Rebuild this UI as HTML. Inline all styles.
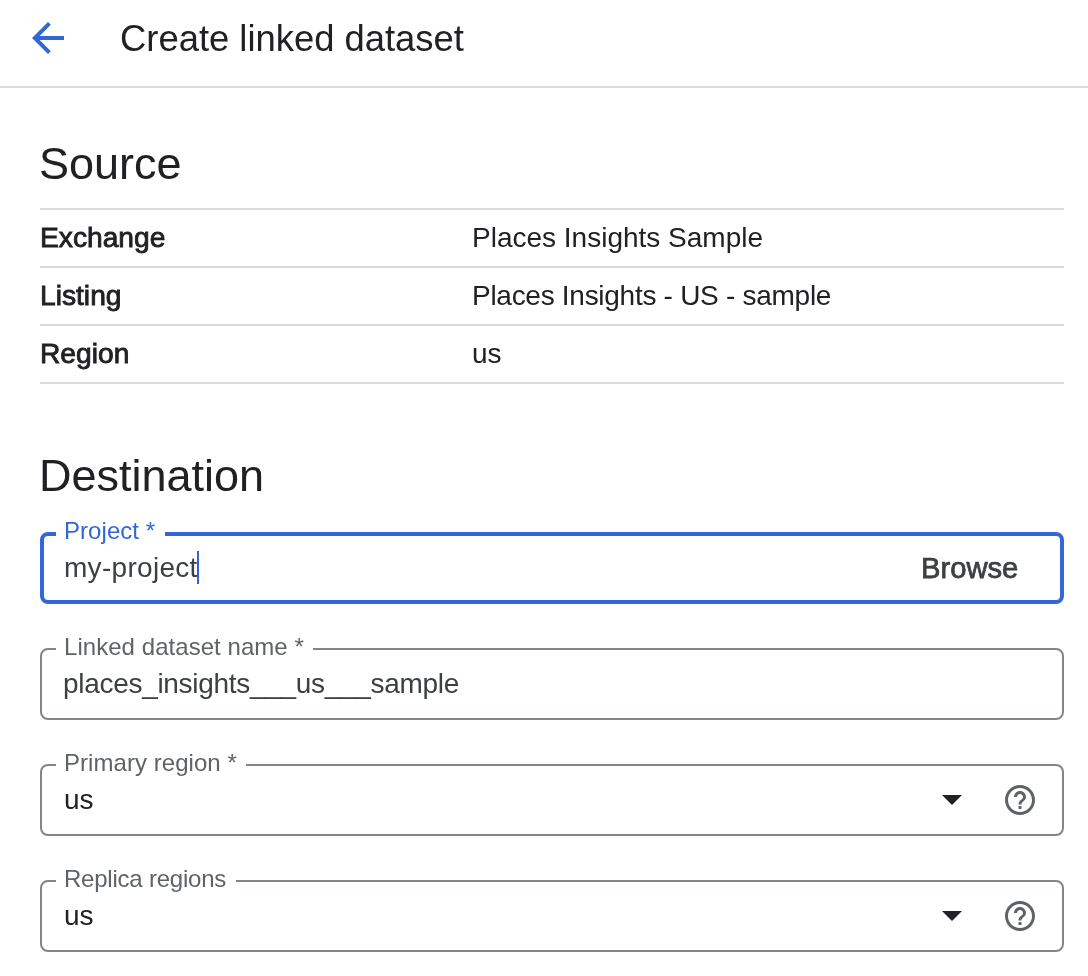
<!DOCTYPE html>
<html><head><meta charset="utf-8">
<style>
*{box-sizing:border-box;margin:0;padding:0}
html,body{width:1088px;height:976px;overflow:hidden;background:#fff}
body{font-family:"Liberation Sans",sans-serif;color:#202124;position:relative}
.abs,.flabel,.fval{will-change:transform}
.abs{position:absolute;white-space:nowrap}
.hdr-line{position:absolute;left:0;top:86px;width:1088px;height:2px;background:#dadce0}
.title{left:120px;top:15px;font-size:36.4px;line-height:48px}
.h2{font-size:45px;line-height:56px}
.rule{position:absolute;left:40px;width:1024px;height:2px;background:#dadce0}
.lbl{font-size:28.2px;line-height:40px;color:#202124;-webkit-text-stroke:0.85px #202124}
.val{font-size:28px;line-height:40px;color:#202124}
.field{position:absolute;left:40px;width:1024px;height:72px;border:2px solid #80868b;border-radius:8px}
.field.focus{border:4px solid #3367d6}
.flabel{position:absolute;background:#fff;font-size:24px;line-height:28px;color:#5f6368;padding:0 9.5px 0 8px;letter-spacing:0.05px}
.fval{position:absolute;font-size:28px;line-height:36px;color:#202124}
</style></head>
<body>
<svg class="abs" style="left:24px;top:14px" width="48" height="48" viewBox="0 0 24 24"><path fill="#3367d6" d="M20 11H7.83l5.59-5.59L12 4l-8 8 8 8 1.41-1.41L7.83 13H20v-2z"/></svg>
<div class="abs title">Create linked dataset</div>
<div class="hdr-line"></div>

<div class="abs h2" style="left:39px;top:136px">Source</div>
<div class="rule" style="top:208px"></div>
<div class="abs lbl" style="left:40px;top:217px">Exchange</div>
<div class="abs val" style="left:472px;top:218px">Places Insights Sample</div>
<div class="rule" style="top:266px"></div>
<div class="abs lbl" style="left:40px;top:275px">Listing</div>
<div class="abs val" style="left:472px;top:276px;letter-spacing:-0.28px">Places Insights - US - sample</div>
<div class="rule" style="top:324px"></div>
<div class="abs lbl" style="left:40px;top:333px">Region</div>
<div class="abs val" style="left:472px;top:334px">us</div>
<div class="rule" style="top:382px"></div>

<div class="abs h2" style="left:39px;top:448px">Destination</div>

<div class="field focus" style="top:532px"></div>
<div class="flabel" style="left:56px;top:517px;color:#3367d6">Project *</div>
<div class="fval" style="left:64px;top:550px;color:#3c4043;letter-spacing:0.3px">my-project</div>
<div class="abs" style="left:921px;top:550px;font-size:29.2px;line-height:36px;color:#3c4043;-webkit-text-stroke:0.75px #3c4043">Browse</div>

<div class="field" style="top:648px"></div>
<div class="flabel" style="left:56px;top:633px">Linked dataset name *</div>
<div class="fval" style="left:63px;top:666px;color:#3c4043;letter-spacing:-0.3px">places_insights___us___sample</div>

<div class="field" style="top:764px"></div>
<div class="flabel" style="left:56px;top:749px">Primary region *</div>
<div class="fval" style="left:64px;top:782px">us</div>

<div class="field" style="top:880px"></div>
<div class="flabel" style="left:56px;top:865px;letter-spacing:-0.22px">Replica regions</div>
<div class="fval" style="left:64px;top:898px">us</div>

<div class="abs" style="left:197px;top:551px;width:2px;height:33px;background:#2d65d8"></div>
<svg class="abs" style="left:942px;top:795px" width="20" height="10" viewBox="0 0 20 10"><path d="M0 0h20L10 10z" fill="#202124"/></svg>
<svg class="abs" style="left:1002px;top:782px" width="36" height="36" viewBox="0 0 24 24"><path fill="#5f6368" d="M11 18h2v-2h-2v2zm1-16C6.48 2 2 6.48 2 12s4.48 10 10 10 10-4.48 10-10S17.52 2 12 2zm0 18c-4.41 0-8-3.59-8-8s3.59-8 8-8 8 3.590 8 8-3.59 8-8 8zm0-14c-2.21 0-4 1.79-4 4h2c0-1.1.9-2 2-2s2 .9 2 2c0 2-3 1.75-3 5h2c0-2.25 3-2.5 3-5 0-2.21-1.79-4-4-4z"/></svg>
<svg class="abs" style="left:942px;top:911px" width="20" height="10" viewBox="0 0 20 10"><path d="M0 0h20L10 10z" fill="#202124"/></svg>
<svg class="abs" style="left:1002px;top:898px" width="36" height="36" viewBox="0 0 24 24"><path fill="#5f6368" d="M11 18h2v-2h-2v2zm1-16C6.48 2 2 6.48 2 12s4.48 10 10 10 10-4.48 10-10S17.52 2 12 2zm0 18c-4.41 0-8-3.59-8-8s3.59-8 8-8 8 3.590 8 8-3.59 8-8 8zm0-14c-2.21 0-4 1.79-4 4h2c0-1.1.9-2 2-2s2 .9 2 2c0 2-3 1.75-3 5h2c0-2.25 3-2.5 3-5 0-2.21-1.79-4-4-4z"/></svg>
</body></html>
